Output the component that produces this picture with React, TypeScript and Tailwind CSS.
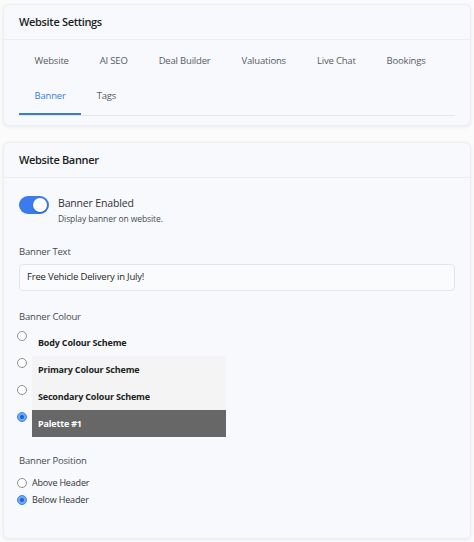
import React from 'react';

const tabs = ['Website', 'AI SEO', 'Deal Builder', 'Valuations', 'Live Chat', 'Bookings', 'Banner', 'Tags'];

const colourOptions = [
  { label: 'Body Colour Scheme', box: 'bg-transparent text-[#1b1e22]', checked: false },
  { label: 'Primary Colour Scheme', box: 'bg-[#f4f4f4] text-[#1b1e22]', checked: false },
  { label: 'Secondary Colour Scheme', box: 'bg-[#f4f4f4] text-[#1b1e22]', checked: false },
  { label: 'Palette #1', box: 'bg-[#676767] text-white', checked: true },
];

function Radio({ checked }: { checked: boolean }) {
  if (checked) {
    return (
      <span className="flex h-[10px] w-[10px] shrink-0 items-center justify-center rounded-full border border-[#3f84ea] bg-[#6fa9f6]">
        <span className="h-[4px] w-[4px] rounded-full bg-[#1d5dd1]" />
      </span>
    );
  }
  return <span className="block h-[10px] w-[10px] shrink-0 rounded-full border border-[#8c8f94] bg-white" />;
}

export default function App() {
  const active = 'Banner';

  return (
    <div className="min-h-screen bg-[#fbfbfc] px-[3px] pt-[4px] pb-[4px] font-['Open_Sans',sans-serif]">
      {/* Website Settings */}
      <div className="rounded-md border border-[#eceef2] bg-[#f8f9fc] shadow-[0_1px_4px_rgba(0,0,0,0.07)]">
        <div className="flex h-[35px] items-center border-b border-[#eceef2] px-[15px]">
          <h2 className="text-[11px] font-semibold tracking-[-0.03em] text-[#1b1e22]">Website Settings</h2>
        </div>
        <div className="px-[15px] pt-[4px] pb-[9px]">
          <nav className="flex flex-wrap border-b border-[#e4e6ea]">
            {tabs.map((t) => (
              <button
                key={t}
                className={`flex h-[35.5px] items-center border-b-2 px-[15.5px] text-[9.5px] tracking-[-0.02em] ${
                  t === active ? 'border-[#3a7bdc] text-[#3a7bdc]' : 'border-transparent text-[#575c63]'
                }`}
              >
                {t}
              </button>
            ))}
          </nav>
        </div>
      </div>

      {/* Website Banner */}
      <div className="mt-[16px] rounded-md border border-[#eceef2] bg-[#f8f9fc] shadow-[0_1px_4px_rgba(0,0,0,0.07)]">
        <div className="flex h-[35px] items-center border-b border-[#eceef2] px-[15px]">
          <h2 className="text-[11px] font-semibold tracking-[-0.03em] text-[#1b1e22]">Website Banner</h2>
        </div>
        <div className="px-[15px] pt-[18px] pb-[30px]">
          <div className="flex items-start gap-[9px]">
            <span className="relative flex h-[18px] w-[30px] shrink-0 items-center rounded-full bg-[#3a7bef]">
              <span className="absolute right-[2px] h-[14px] w-[14px] rounded-full bg-white shadow-[0_1px_2px_rgba(0,0,0,0.25)]" />
            </span>
            <div>
              <div className="text-[10.5px] leading-[14px] tracking-[-0.015em] text-[#2f3338]">Banner Enabled</div>
              <div className="mt-[3px] text-[8.5px] leading-[11px] tracking-[-0.01em] text-[#464b51]">
                Display banner on website.
              </div>
            </div>
          </div>

          <div className="mt-[21px] text-[9.5px] leading-[14px] tracking-[-0.02em] text-[#464b51]">Banner Text</div>
          <div className="mt-[5px] flex h-[27px] items-center rounded-sm border border-[#e3e5ea] bg-[#fafbfd] px-[7px] text-[9.5px] tracking-[-0.02em] text-[#22252a]">
            Free Vehicle Delivery in July!
          </div>

          <div className="mt-[19px] text-[9.5px] leading-[14px] tracking-[-0.02em] text-[#464b51]">Banner Colour</div>
          <div className="mt-[5px] flex flex-col">
            {colourOptions.map((o) => (
              <div key={o.label} className="-ml-[2px] flex h-[27px] items-start gap-[5px]">
                <span className="mt-[2px]">
                  <Radio checked={o.checked} />
                </span>
                <div
                  className={`flex h-[27px] w-[194px] items-center px-[6px] text-[9px] font-bold tracking-[-0.02em] ${o.box}`}
                >
                  {o.label}
                </div>
              </div>
            ))}
          </div>

          <div className="mt-[17px] text-[9.5px] leading-[14px] tracking-[-0.02em] text-[#464b51]">Banner Position</div>
          <div className="mt-[6px] flex flex-col">
            {[
              { label: 'Above Header', checked: false },
              { label: 'Below Header', checked: true },
            ].map((o) => (
              <div key={o.label} className="-ml-[2px] flex h-[17px] items-center gap-[5px]">
                <Radio checked={o.checked} />
                <span className="text-[9px] tracking-[-0.02em] text-[#2f3338]">{o.label}</span>
              </div>
            ))}
          </div>
        </div>
      </div>
    </div>
  );
}
